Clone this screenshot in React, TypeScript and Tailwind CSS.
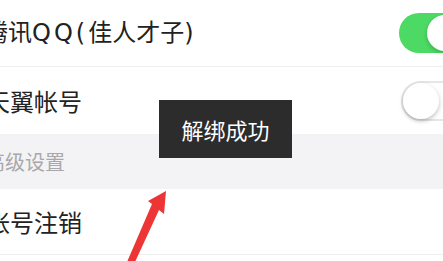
import React from "react";

function Toggle({ on }: { on: boolean }) {
  return on ? (
    <div className="relative h-[40px] w-[66px] shrink-0 rounded-full bg-[#4cd964]">
      <div className="absolute right-[2px] top-[2px] h-[36px] w-[36px] rounded-full bg-white shadow-[0_2px_4px_rgba(0,0,0,0.2)]" />
    </div>
  ) : (
    <div className="relative h-[40px] w-[66px] shrink-0 rounded-full border-2 border-[#e6e6e6] bg-white">
      <div className="absolute left-0 top-0 h-[36px] w-[36px] rounded-full bg-white shadow-[0_2px_4px_rgba(0,0,0,0.25)]" />
    </div>
  );
}

export default function App() {
  const font = { fontFamily: '"Noto Sans CJK SC", "Noto Sans", sans-serif' };
  const latin = { fontFamily: '"DejaVu Sans", "Noto Sans CJK SC", sans-serif' };

  return (
    <div className="relative h-[261px] w-[443px] overflow-hidden bg-white" style={font}>
      <div className="flex h-[67px] items-center justify-between border-b border-[#efefef]">
        <span className="ml-[-16px] whitespace-nowrap text-[24px] leading-none text-[#222]" style={latin}>
          腾讯<span className="tracking-[3px]">QQ(</span>佳人才子)
        </span>
        <div className="mr-[-22px] mt-[-1px]">
          <Toggle on />
        </div>
      </div>
      <div className="flex h-[67px] items-center justify-between">
        <span className="ml-[-14px] text-[24px] leading-none text-[#222]">天翼帐号</span>
        <div className="mr-[-24px] mt-[1px]">
          <Toggle on={false} />
        </div>
      </div>
      <div className="flex h-[55px] items-center bg-[#f3f3f5]">
        <span className="ml-[-15px] text-[20px] leading-none text-[#a8a8ab]">高级设置</span>
      </div>
      <div className="flex h-[66px] items-center border-b border-[#efefef]">
        <span className="ml-[-14px] text-[24px] leading-none text-[#222]">帐号注销</span>
      </div>

      <div className="absolute left-[159px] top-[100px] flex h-[58px] w-[133px] items-center justify-center bg-[#2c2c2c]">
        <span className="text-[22px] leading-none text-white">解绑成功</span>
      </div>

      <svg className="absolute left-0 top-0" width="443" height="261" viewBox="0 0 443 261">
        <polygon
          points="166,191 164,214 159,210 135,262 127,262 152,204 148,201"
          fill="#ee3535"
        />
      </svg>
    </div>
  );
}
